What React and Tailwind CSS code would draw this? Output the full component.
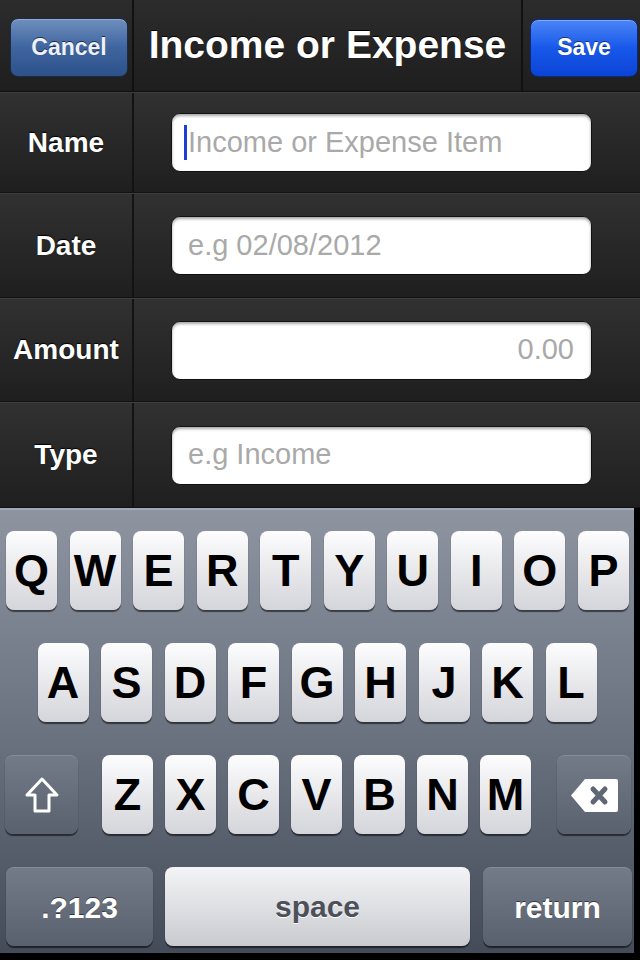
import React from 'react';

const rows = [
  { label: 'Name', h: 'h-[101px]', placeholder: 'Income or Expense Item', cursor: true },
  { label: 'Date', h: 'h-[105px]', placeholder: 'e.g 02/08/2012' },
  { label: 'Amount', h: 'h-[104px]', placeholder: '0.00', right: true },
  { label: 'Type', h: 'h-[106px]', placeholder: 'e.g Income' },
];

const row1 = ['Q', 'W', 'E', 'R', 'T', 'Y', 'U', 'I', 'O', 'P'];
const row2 = ['A', 'S', 'D', 'F', 'G', 'H', 'J', 'K', 'L'];
const row3 = ['Z', 'X', 'C', 'V', 'B', 'N', 'M'];

function LetterKey({ ch }) {
  return (
    <div className="w-[51px] h-[79px] rounded-[8px] bg-gradient-to-b from-[#fdfdfe] to-[#d4d5da] shadow-[0_2px_1px_rgba(0,0,0,0.55)] flex items-center justify-center text-[45px] font-bold text-black leading-none">
      {ch}
    </div>
  );
}

function FnKey({ className, children }) {
  return (
    <div className={`h-[79px] rounded-[8px] bg-gradient-to-b from-[#737a88] to-[#5a616e] shadow-[0_2px_1px_rgba(0,0,0,0.55)] border-t border-[#868c98] flex items-center justify-center ${className}`}>
      {children}
    </div>
  );
}

export default function App() {
  return (
    <div className="w-[640px] h-[960px] bg-black overflow-hidden font-['Liberation_Sans',Arial,sans-serif] flex flex-col">
      {/* nav bar */}
      <div className="h-[92px] flex bg-gradient-to-b from-[#2c2c2c] to-[#1e1e1e] border-b border-[#0e0e0e]">
        <div className="w-[134px] border-r-2 border-[#111] flex items-center pl-[10px] pt-[4px]">
          <div className="w-[118px] h-[59px] rounded-[8px] border border-[#1c2c44] bg-gradient-to-b from-[#6f8fbd] via-[#3f65a0] to-[#2d5189] shadow-[inset_0_1px_0_rgba(255,255,255,0.25)] flex items-center justify-center text-[#eef2f8] text-[23px] font-bold [text-shadow:0_-1px_0_rgba(0,0,0,0.6)]">
            Cancel
          </div>
        </div>
        <div className="flex-1 flex items-center justify-center text-white text-[39px] font-bold [text-shadow:0_-1px_0_#000]">
          Income or Expense
        </div>
        <div className="w-[119px] border-l-2 border-[#111] flex items-center pl-[7px] pt-[4px]">
          <div className="w-[108px] h-[58px] rounded-[8px] border border-[#0a2a7a] bg-gradient-to-b from-[#4a84f6] via-[#1858ea] to-[#0b44d6] shadow-[inset_0_1px_0_rgba(255,255,255,0.3)] flex items-center justify-center text-white text-[23px] font-bold [text-shadow:0_-1px_0_rgba(0,0,0,0.5)]">
            Save
          </div>
        </div>
      </div>

      {/* form rows */}
      {rows.map((r) => (
        <div key={r.label} className={`${r.h} flex border-t border-[#3e3e3e] border-b border-b-[#121212] bg-gradient-to-b from-[#313131] to-[#1f1f1f]`}>
          <div className="w-[134px] border-r-2 border-[#131313] flex items-center justify-center text-white text-[28px] font-bold [text-shadow:0_-1px_1px_#000]">
            {r.label}
          </div>
          <div className="flex-1 flex items-center pl-[37px]">
            <div className={`w-[421px] h-[59px] rounded-[9px] bg-white border border-[#111] shadow-[inset_0_2px_3px_rgba(0,0,0,0.35)] flex items-center text-[29px] text-[#a9a9a9] ${r.right ? 'justify-end pr-[17px]' : 'pl-[12px]'}`}>
              {r.cursor && <span className="w-[3px] h-[35px] bg-[#1d3fd6] mr-[1px]" />}
              {!r.cursor && !r.right && <span className="w-[4px]" />}
              {r.placeholder}
            </div>
          </div>
        </div>
      ))}

      {/* keyboard */}
      <div className="flex-1 flex">
        <div className="w-[634px] h-[445px] bg-gradient-to-b from-[#8e95a1] via-[#6b7280] to-[#454c59] border-t-2 border-[#a4aab4] pt-[21px] flex flex-col gap-[33px]">
          <div className="flex justify-between pl-[6px] pr-[5px]">
            {row1.map((c) => <LetterKey key={c} ch={c} />)}
          </div>
          <div className="flex justify-center gap-[12.5px]">
            {row2.map((c) => <LetterKey key={c} ch={c} />)}
          </div>
          <div className="flex justify-between items-center pl-[5px] pr-[3px]">
            <FnKey className="w-[73px]">
              <svg width="36" height="38" viewBox="0 0 36 38">
                <path d="M18 3 L33 19 L25 19 L25 35 L11 35 L11 19 L3 19 Z" fill="none" stroke="#fff" strokeWidth="3" strokeLinejoin="round" />
              </svg>
            </FnKey>
            <div className="flex gap-[12px] pr-[2px]">
              {row3.map((c) => <LetterKey key={c} ch={c} />)}
            </div>
            <FnKey className="w-[74px]">
              <svg width="49" height="35" viewBox="0 0 49 35">
                <path d="M15 1 H46 Q48 1 48 3 V32 Q48 34 46 34 H15 L1 17.5 Z" fill="#fff" />
                <path d="M23 11 L35 24 M35 11 L23 24" stroke="#5f6674" strokeWidth="5" strokeLinecap="round" />
              </svg>
            </FnKey>
          </div>
          <div className="flex gap-[12px] pl-[6px] pr-[2px]">
            <FnKey className="w-[147px] text-white text-[30px] font-bold [text-shadow:0_-1px_0_rgba(0,0,0,0.5)]">.?123</FnKey>
            <div className="w-[305px] h-[79px] rounded-[8px] bg-gradient-to-b from-[#f4f4f6] to-[#c9cbd0] shadow-[0_2px_1px_rgba(0,0,0,0.55)] flex items-center justify-center text-[30px] font-bold text-[#4c5059] [text-shadow:0_1px_0_#fff]">
              space
            </div>
            <FnKey className="w-[149px] ml-[1px] text-white text-[30px] font-bold [text-shadow:0_-1px_0_rgba(0,0,0,0.5)]">return</FnKey>
          </div>
        </div>
      </div>
    </div>
  );
}
